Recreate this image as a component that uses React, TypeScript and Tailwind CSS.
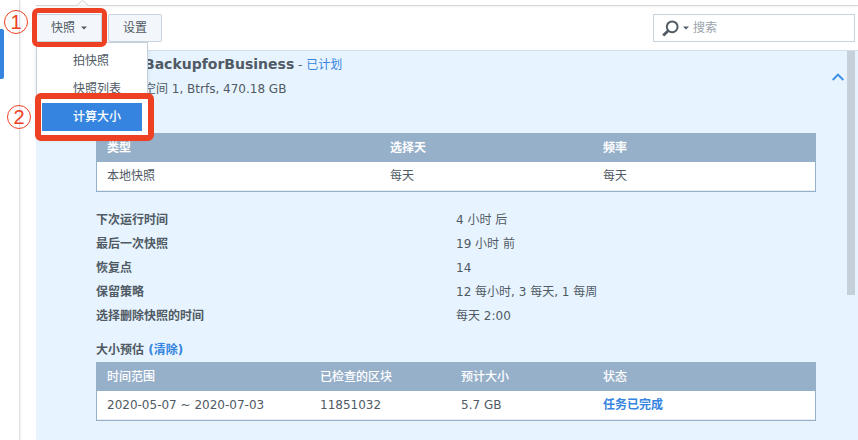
import { useState } from "react";
import type { ReactNode } from "react";

const menuItems = ["拍快照", "快照列表", "计算大小"];

const details = [
  { label: "下次运行时间", value: "4 小时 后" },
  { label: "最后一次快照", value: "19 小时 前" },
  { label: "恢复点", value: "14" },
  { label: "保留策略", value: "12 每小时, 3 每天, 1 每周" },
  { label: "选择删除快照的时间", value: "每天 2:00" },
];

const Caret = () => (
  <svg width="6" height="4" viewBox="0 0 6 4" fill="currentColor" aria-hidden="true">
    <path d="M0 0.5h6L3 3.5z" />
  </svg>
);

const StepNumber = ({ children, className }: { children: ReactNode; className: string }) => (
  <span
    className={`absolute z-30 flex size-6 items-center justify-center rounded-full border border-[#ee4023] font-['Liberation_Sans',sans-serif] text-xl leading-none font-normal text-[#ee4023] ${className}`}
  >
    {children}
  </span>
);

const Toolbar = () => {
  const [open, setOpen] = useState(true);

  return (
    <div className="flex justify-between py-2 pr-[3px]">
      <div className="flex gap-1.5">
        <div className="relative">
          <button
            type="button"
            aria-expanded={open}
            onClick={() => setOpen(!open)}
            className="flex h-7 items-center gap-1.5 rounded-xs border border-[#c6d4e0] bg-[#f3f6fb] px-3.5"
          >
            快照
            <Caret />
          </button>
          <div className="pointer-events-none absolute -top-1.5 -right-[5px] -bottom-[5px] -left-1 z-30 rounded-md border-[5px] border-[#ee4023]" />
          <StepNumber className="-top-1 -left-8">1</StepNumber>

          {/* Snapshot menu */}
          {open && (
            <ul className="absolute top-full left-0 z-20 w-28 border border-[#c6d0da] bg-white p-1 shadow-md">
              {menuItems.map((item) => {
                const active = item === "计算大小";
                return (
                  <li key={item} className="relative">
                    <button
                      type="button"
                      className={
                        active
                          ? "relative z-20 ml-px block h-7 w-[100px] bg-[#3585e0] pl-[31px] text-left font-medium text-white"
                          : "block h-7 w-full pl-8 text-left"
                      }
                    >
                      {item}
                    </button>
                    {active && (
                      <>
                        <div className="pointer-events-none absolute -top-2.5 -right-[11px] -bottom-2.5 -left-1.5 z-10 rounded-md border-6 border-[#ee4023] bg-white" />
                        <StepNumber className="top-0.5 -left-[34px]">2</StepNumber>
                      </>
                    )}
                  </li>
                );
              })}
            </ul>
          )}
        </div>
        <button type="button" className="h-7 rounded-xs border border-[#c6d4e0] bg-[#f3f6fb] px-3.5">
          设置
        </button>
      </div>

      <label className="flex h-7 w-[202px] items-center border border-[#c6d4e0] bg-white pl-2">
        <svg width="17" height="17" viewBox="0 0 17 17" fill="none" stroke="#505a64" aria-hidden="true">
          <circle cx="10.2" cy="6.8" r="5.4" strokeWidth="2" />
          <path d="M6.2 10.8L1.2 15.6" strokeWidth="2.8" />
        </svg>
        <span className="ml-1">
          <Caret />
        </span>
        <input
          type="text"
          placeholder="搜索"
          aria-label="搜索"
          className="ml-1 min-w-0 flex-1 bg-transparent outline-none placeholder:text-[#9aa3ad]"
        />
      </label>
    </div>
  );
};

const tableClass =
  "w-full table-fixed border-separate border-spacing-0 border border-[#97b0ca] bg-white text-left";
const thClass = "h-7 bg-[#97b0ca] px-2.5 py-0 text-white";
const tdClass = "h-[29px] border-b border-[#e7eef5] px-2.5 py-0";

const ScheduleTable = () => (
  <table className={tableClass}>
    <thead>
      <tr className="font-bold">
        <th className={`${thClass} w-[283px]`}>类型</th>
        <th className={`${thClass} w-[213px]`}>选择天</th>
        <th className={thClass}>频率</th>
      </tr>
    </thead>
    <tbody>
      <tr>
        <td className={tdClass}>本地快照</td>
        <td className={tdClass}>每天</td>
        <td className={tdClass}>每天</td>
      </tr>
    </tbody>
  </table>
);

const SizeTable = () => (
  <table className={tableClass}>
    <thead>
      <tr>
        <th className={`${thClass} w-[213px] font-medium`}>时间范围</th>
        <th className={`${thClass} w-[141px] font-medium`}>已检查的区块</th>
        <th className={`${thClass} w-[142px] font-medium`}>预计大小</th>
        <th className={`${thClass} font-medium`}>状态</th>
      </tr>
    </thead>
    <tbody>
      <tr>
        <td className={tdClass}>2020-05-07 ~ 2020-07-03</td>
        <td className={tdClass}>11851032</td>
        <td className={tdClass}>5.7 GB</td>
        <td className={`${tdClass} font-bold text-[#3585e0]`}>任务已完成</td>
      </tr>
    </tbody>
  </table>
);

export default function App() {
  return (
    <div className="flex min-h-screen bg-white font-['DejaVu_Sans','Noto_Sans_CJK_SC',sans-serif] text-xs text-[#505a64]">
      {/* Side rail */}
      <aside className="w-5 shrink-0 border-r border-[#dcdfe3] pt-[29px] shadow-sm">
        <div className="h-[50px] w-1 rounded-r-xs bg-[#3585e0]" />
      </aside>

      <main className="flex min-w-0 flex-1 flex-col pl-4">
        {/* Bottom edge of the tab strip with its pointer */}
        <div className="h-1.5 border-b border-[#d3d7db] pl-10 shadow-xs">
          <svg width="14" height="6" viewBox="0 0 14 6" fill="white" stroke="#cdd1d6" aria-hidden="true">
            <path d="M0.5 5.5L6.5 0.5L12.5 5.5" />
          </svg>
        </div>

        <Toolbar />

        <section className="flex flex-1 items-start border-t border-[#d0deea] bg-[#e7f4ff]">
          <div className="min-w-0 flex-1 pt-px pb-4 pl-[60px]">
            <div className="flex items-center justify-between pr-[3px]">
              <div className="pl-12 leading-6">
                <h1>
                  <span className="text-sm leading-6 font-bold">BackupforBusiness</span> -{" "}
                  <a href="#schedule" className="text-[#3585e0]">
                    已计划
                  </a>
                </h1>
                <p>空间 1, Btrfs, 470.18 GB</p>
              </div>
              <button type="button" aria-label="收起">
                <svg width="12" height="8" viewBox="0 0 12 8" fill="none" stroke="#3a8ee6" strokeWidth="2">
                  <path d="M0.7 7L6 1.6L11.3 7" />
                </svg>
              </button>
            </div>

            <div className="mt-8 mr-[31px]">
              <ScheduleTable />
              <dl className="mt-4 leading-6">
                {details.map((row) => (
                  <div key={row.label} className="grid grid-cols-2">
                    <dt className="font-bold">{row.label}</dt>
                    <dd>{row.value}</dd>
                  </div>
                ))}
              </dl>
              <h2 className="mt-2.5 leading-6 font-bold">
                大小预估{" "}
                <a href="#clear" className="text-[#3585e0]">
                  (清除)
                </a>
              </h2>
              <SizeTable />
            </div>
          </div>

          {/* Scrollbar thumb */}
          <div className="mr-[3px] h-[244px] w-2 shrink-0 bg-[#c6d0da]" />
        </section>
      </main>
    </div>
  );
}
